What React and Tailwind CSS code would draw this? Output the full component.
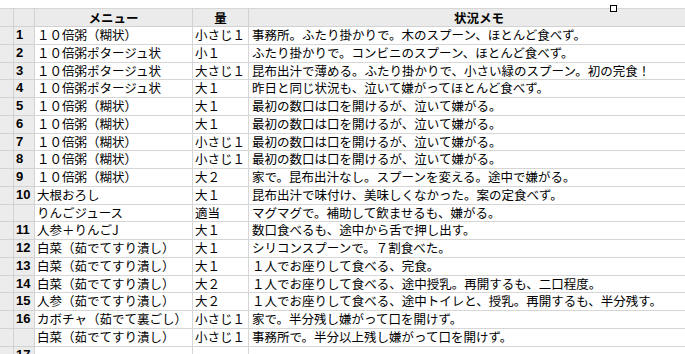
import React from 'react';

const rows = [
  { n: '1', menu: '１０倍粥（糊状）', qty: '小さじ１', memo: '事務所。ふたり掛かりで。木のスプーン、ほとんど食べず。' },
  { n: '2', menu: '１０倍粥ポタージュ状', qty: '小１', memo: 'ふたり掛かりで。コンビニのスプーン、ほとんど食べず。' },
  { n: '3', menu: '１０倍粥ポタージュ状', qty: '大さじ１', memo: '昆布出汁で薄める。ふたり掛かりで、小さい緑のスプーン。初の完食！' },
  { n: '4', menu: '１０倍粥ポタージュ状', qty: '大１', memo: '昨日と同じ状況も、泣いて嫌がってほとんど食べず。' },
  { n: '5', menu: '１０倍粥（糊状）', qty: '大１', memo: '最初の数口は口を開けるが、泣いて嫌がる。' },
  { n: '6', menu: '１０倍粥（糊状）', qty: '大１', memo: '最初の数口は口を開けるが、泣いて嫌がる。' },
  { n: '7', menu: '１０倍粥（糊状）', qty: '小さじ１', memo: '最初の数口は口を開けるが、泣いて嫌がる。' },
  { n: '8', menu: '１０倍粥（糊状）', qty: '小さじ１', memo: '最初の数口は口を開けるが、泣いて嫌がる。' },
  { n: '9', menu: '１０倍粥（糊状）', qty: '大２', memo: '家で。昆布出汁なし。スプーンを変える。途中で嫌がる。' },
  { n: '10', menu: '大根おろし', qty: '大１', memo: '昆布出汁で味付け、美味しくなかった。案の定食べず。' },
  { n: '', menu: 'りんごジュース', qty: '適当', memo: 'マグマグで。補助して飲ませるも、嫌がる。' },
  { n: '11', menu: '人参＋りんごJ', qty: '大１', memo: '数口食べるも、途中から舌で押し出す。' },
  { n: '12', menu: '白菜（茹でてすり潰し）', qty: '大１', memo: 'シリコンスプーンで。７割食べた。' },
  { n: '13', menu: '白菜（茹でてすり潰し）', qty: '大１', memo: '１人でお座りして食べる、完食。' },
  { n: '14', menu: '白菜（茹でてすり潰し）', qty: '大２', memo: '１人でお座りして食べる、途中授乳。再開するも、二口程度。' },
  { n: '15', menu: '人参（茹でてすり潰し）', qty: '大２', memo: '１人でお座りして食べる、途中トイレと、授乳。再開するも、半分残す。' },
  { n: '16', menu: 'カボチャ（茹でて裏ごし）', qty: '小さじ１', memo: '家で。半分残し嫌がって口を開けず。' },
  { n: '', menu: '白菜（茹でてすり潰し）', qty: '小さじ１', memo: '事務所で。半分以上残し嫌がって口を開けず。' },
  { n: '17', menu: '', qty: '', memo: '' },
];

const grid = 'grid grid-cols-[14px_21px_158px_56px_460px]';

export default function App() {
  return (
    <div className="relative w-[685px] h-[354px] overflow-hidden bg-white text-black font-['Noto_Sans_CJK_JP',sans-serif]">
      {/* selection handle */}
      <div className="absolute left-[610px] top-[5px] w-[7px] h-[7px] border border-black bg-white z-10" />

      <div className="pt-[8px] w-[709px]">
        {/* header */}
        <div className={`${grid} h-[19px] border-t border-[#d6d6d6] bg-[#ebebeb] text-[12.5px] font-bold leading-[17px]`}>
          <div className="border-r border-b border-[#d2d2d2]" />
          <div className="border-r border-b border-[#d2d2d2]" />
          <div className="border-r border-b border-[#d2d2d2] text-center">メニュー</div>
          <div className="border-r border-b border-[#d2d2d2] text-center">量</div>
          <div className="border-b border-[#d2d2d2] text-center">状況メモ</div>
        </div>

        {rows.map((r, i) => (
          <div key={i} className={`${grid} h-[17.75px] text-[12.5px] leading-[16.75px]`}>
            <div className="bg-[#ececec] border-r border-b border-[#d2d2d2]" />
            <div className="bg-[#ececec] border-r border-b border-[#d2d2d2] pl-[2px] font-['Liberation_Sans',sans-serif] font-bold text-[13px]">
              {r.n}
            </div>
            <div className="border-r border-b border-[#d6d6d6] pl-[2px] whitespace-nowrap">{r.menu}</div>
            <div className="border-r border-b border-[#d6d6d6] pl-[2px] whitespace-nowrap">{r.qty}</div>
            <div className="border-b border-[#d6d6d6] pl-[3px] whitespace-nowrap">{r.memo}</div>
          </div>
        ))}
      </div>
    </div>
  );
}
